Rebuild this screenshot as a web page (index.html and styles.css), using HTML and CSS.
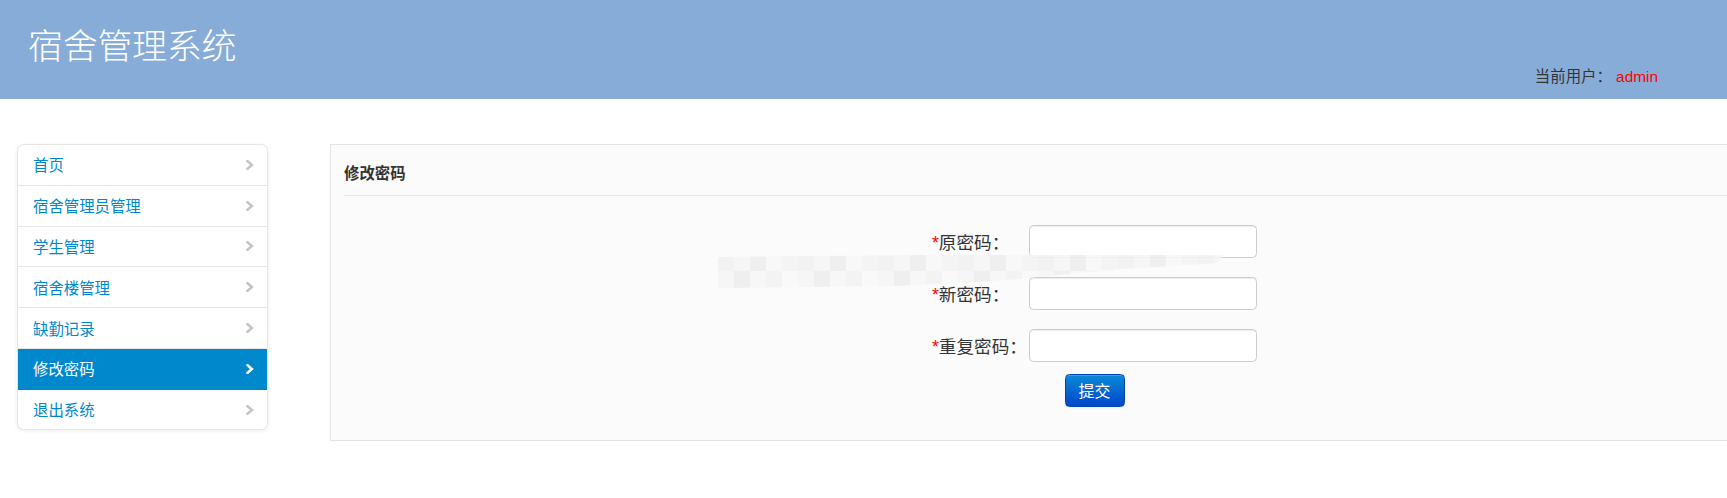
FILE: index.html
```html
<!DOCTYPE html>
<html lang="zh-CN">
<head>
    <meta charset="UTF-8">
    <meta name="viewport" content="width=device-width, initial-scale=1.0">
    <title>宿舍管理系统</title>
    <link rel="stylesheet" href="styles.css">
</head>
<body>
    <div class="header">
        <h1 class="brand">宿舍管理系统</h1>
        <div class="current-user">当前用户： <span class="username">admin</span></div>
    </div>

    <div class="page">
        <ul class="side-nav">
            <li><a href="#">首页<svg class="chevron" viewBox="0 0 8 10"><path d="M1.5 1.2 L5.8 5 L1.5 8.8"/></svg></a></li>
            <li><a href="#">宿舍管理员管理<svg class="chevron" viewBox="0 0 8 10"><path d="M1.5 1.2 L5.8 5 L1.5 8.8"/></svg></a></li>
            <li><a href="#">学生管理<svg class="chevron" viewBox="0 0 8 10"><path d="M1.5 1.2 L5.8 5 L1.5 8.8"/></svg></a></li>
            <li><a href="#">宿舍楼管理<svg class="chevron" viewBox="0 0 8 10"><path d="M1.5 1.2 L5.8 5 L1.5 8.8"/></svg></a></li>
            <li><a href="#">缺勤记录<svg class="chevron" viewBox="0 0 8 10"><path d="M1.5 1.2 L5.8 5 L1.5 8.8"/></svg></a></li>
            <li class="active"><a href="#">修改密码<svg class="chevron" viewBox="0 0 8 10"><path d="M1.5 1.2 L5.8 5 L1.5 8.8"/></svg></a></li>
            <li><a href="#">退出系统<svg class="chevron" viewBox="0 0 8 10"><path d="M1.5 1.2 L5.8 5 L1.5 8.8"/></svg></a></li>
        </ul>

        <div class="panel">
            <h3 class="panel-title">修改密码</h3>
            <form class="pwd-form">
                <label class="field-label"><span class="req">*</span>原密码：</label>
                <input class="field-input" type="password">
                <label class="field-label"><span class="req">*</span>新密码：</label>
                <input class="field-input" type="password">
                <label class="field-label"><span class="req">*</span>重复密码：</label>
                <input class="field-input" type="password">
                <div class="form-actions">
                    <button type="button" class="btn-primary">提交</button>
                </div>
            </form>
        </div>

        <!-- pixelated smear from the original screenshot -->
        <div class="smear"></div>
    </div>
</body>
</html>
```

FILE: styles.css
```css
html, body {
    margin: 0;
}
body {
    font-family: "Liberation Sans", "Noto Sans CJK SC", sans-serif;
    font-size: 15.4px;
    color: #333;
    background-color: #fff;
}

.header {
    height: 99px;
    background-color: #87acd8;
    display: flex;
    justify-content: space-between;
    align-items: flex-start;
}
.brand {
    margin: 0;
    padding: 22px 0 0 28px;
    font-family: "Noto Sans CJK SC", sans-serif;
    font-size: 35px;
    font-weight: 300;
    line-height: 44px;
    color: #fff;
    letter-spacing: -0.3px;
}
.current-user {
    align-self: flex-end;
    margin: 0 69px 11px 0;
    line-height: 22px;
    color: #333;
}
.username {
    color: #f00;
}

.page {
    position: relative;
    display: flex;
    align-items: flex-start;
    padding: 45px 0 0 17px;
}

.side-nav {
    list-style: none;
    margin: 0;
    padding: 0;
    width: 249px;
    flex: none;
    border: 1px solid #e5e5e5;
    border-radius: 6.6px;
    background-color: #fff;
    box-shadow: 0 1px 4px rgba(0, 0, 0, 0.065);
    overflow: hidden;
}
.side-nav li {
    border-bottom: 1px solid #e5e5e5;
}
.side-nav li:last-child {
    border-bottom: none;
}
.side-nav a {
    display: flex;
    justify-content: space-between;
    align-items: center;
    padding: 9.4px 13px 9.4px 15px;
    line-height: 21px;
    color: #0088cc;
    text-decoration: none;
    font-family: "Noto Sans CJK SC", sans-serif;
}
.side-nav .active {
    border-bottom-color: #0088cc;
}
.side-nav .active a {
    background-color: #0088cc;
    color: #fff;
}
.chevron {
    width: 8px;
    height: 10px;
    fill: none;
    stroke: #c4c4c4;
    stroke-width: 2.6;
    stroke-linecap: square;
}
.side-nav .active .chevron {
    stroke: #fff;
}

.panel {
    flex: 1;
    margin-left: 62px;
    padding-bottom: 33px;
    border: 1px solid #e3e3e3;
    border-right-width: 0;
    background-color: #fbfbfb;
}
.panel-title {
    margin: 0 0 0 13px;
    padding: 16px 0 12px;
    border-bottom: 1px solid #e5e5e5;
    font-family: "Noto Sans CJK SC", sans-serif;
    font-size: 15.4px;
    font-weight: bold;
    line-height: 22px;
    color: #333;
}

.pwd-form {
    width: 325px;
    margin: 29px 0 0 601px;
    display: grid;
    grid-template-columns: 97px 228px;
    row-gap: 19px;
    align-items: center;
}
.field-label {
    font-family: "Noto Sans CJK SC", sans-serif;
    font-size: 17.6px;
    line-height: 24px;
    color: #333;
    padding-top: 2px;
}
.req {
    font-family: "Liberation Sans", sans-serif;
    color: #f00;
}
.field-input {
    box-sizing: border-box;
    width: 228px;
    height: 33px;
    margin: 0;
    padding: 4px 7px;
    border: 1px solid #ccc;
    border-radius: 4.4px;
    background-color: #fff;
    box-shadow: inset 0 1px 1px rgba(0, 0, 0, 0.075);
}
.form-actions {
    grid-column: 1 / 3;
    text-align: center;
    margin-top: -7px;
}
.btn-primary {
    width: 60px;
    height: 33px;
    padding: 0;
    border: 1px solid #0044b3;
    border-radius: 4.4px;
    background: linear-gradient(#0a8ad6, #0046cb);
    color: #fff;
    font-family: "Noto Sans CJK SC", sans-serif;
    font-size: 16px;
    line-height: 31px;
    box-shadow: inset 0 1px 0 rgba(255, 255, 255, 0.2), 0 1px 2px rgba(0, 0, 0, 0.05);
}

.smear {
    position: absolute;
    left: 718px;
    top: 156px;
    width: 505px;
    height: 34px;
    background:
        repeating-linear-gradient(90deg, #f1f1f1 0 16px, #f6f6f6 16px 32px, #eeeeee 32px 48px, #f8f8f8 48px 64px, #f3f3f3 64px 80px) top / 100% 16px no-repeat,
        repeating-linear-gradient(90deg, #f5f5f5 0 16px, #eeeeee 16px 32px, #f7f7f7 32px 48px, #f2f2f2 48px 64px, #f9f9f9 64px 80px) bottom / 100% 18px no-repeat;
    clip-path: polygon(0 2px, 40% 0, 100% 0, 99% 8px, 80% 14px, 55% 26px, 35% 31px, 0 33px);
    opacity: 0.9;
}
```
